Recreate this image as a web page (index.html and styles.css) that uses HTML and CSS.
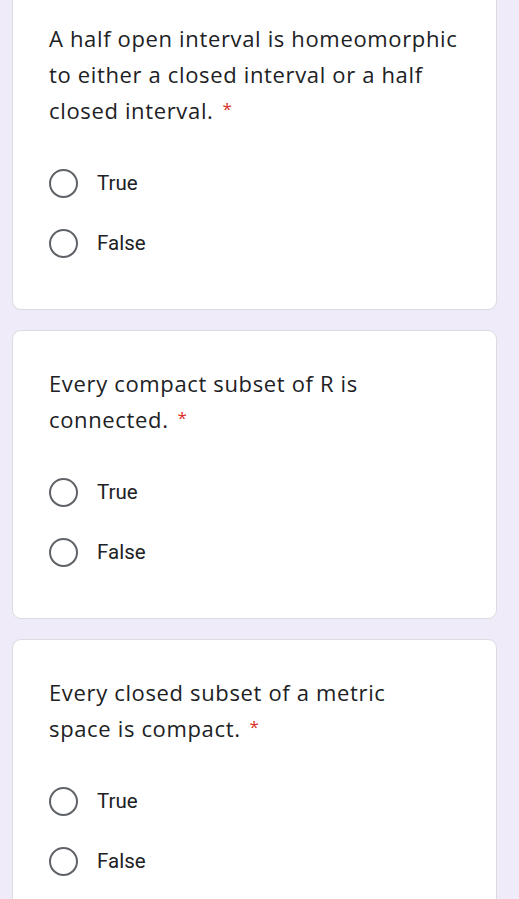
FILE: index.html
```html
<!DOCTYPE html>
<html>
<head>
<meta charset="utf-8">
<link rel="stylesheet" href="styles.css">
</head>
<body>
<div class="page">
  <div class="card first">
    <div class="question">A half open interval is homeomorphic<br>to either a closed interval or a half<br>closed interval.<span class="req">*</span></div>
    <div class="options">
      <div class="option"><span class="radio"></span><span class="label">True</span></div>
      <div class="option"><span class="radio"></span><span class="label">False</span></div>
    </div>
  </div>
  <div class="card">
    <div class="question">Every compact subset of R is<br>connected.<span class="req">*</span></div>
    <div class="options">
      <div class="option"><span class="radio"></span><span class="label">True</span></div>
      <div class="option"><span class="radio"></span><span class="label">False</span></div>
    </div>
  </div>
  <div class="card">
    <div class="question">Every closed subset of a metric<br>space is compact.<span class="req">*</span></div>
    <div class="options">
      <div class="option"><span class="radio"></span><span class="label">True</span></div>
      <div class="option"><span class="radio"></span><span class="label">False</span></div>
    </div>
  </div>
</div>
</body>
</html>
```

FILE: styles.css
```css
html, body {
  margin: 0;
  padding: 0;
  background: #f0ebf8;
  overflow: hidden;
}
.page {
  display: flex;
  flex-direction: column;
  gap: 20px;
  padding-left: 12px;
  width: 485px;
}
.card {
  background: #ffffff;
  border: 1px solid #dadce0;
  border-radius: 9px;
  padding: 34px 20px 36px 36px;
}
.card.first {
  margin-top: -15px;
  border-top-left-radius: 0;
  border-top-right-radius: 0;
}
.question {
  font-family: "Open Sans", sans-serif;
  font-size: 22px;
  line-height: 36px;
  color: #202124;
  letter-spacing: 0.65px;
  white-space: nowrap;
}
.req {
  color: #d93025;
  padding-left: 9px;
  font-size: 17px;
  line-height: 1;
  vertical-align: 4px;
  letter-spacing: 0;
}
.options {
  display: flex;
  flex-direction: column;
  margin-top: 25px;
}
.option {
  display: flex;
  align-items: center;
  height: 60px;
}
.radio {
  width: 25px;
  height: 25px;
  border: 2.5px solid #5f6368;
  border-radius: 50%;
  flex: none;
}
.label {
  margin-left: 19px;
  font-family: Roboto, sans-serif;
  font-size: 20.5px;
  color: #202124;
}
```
